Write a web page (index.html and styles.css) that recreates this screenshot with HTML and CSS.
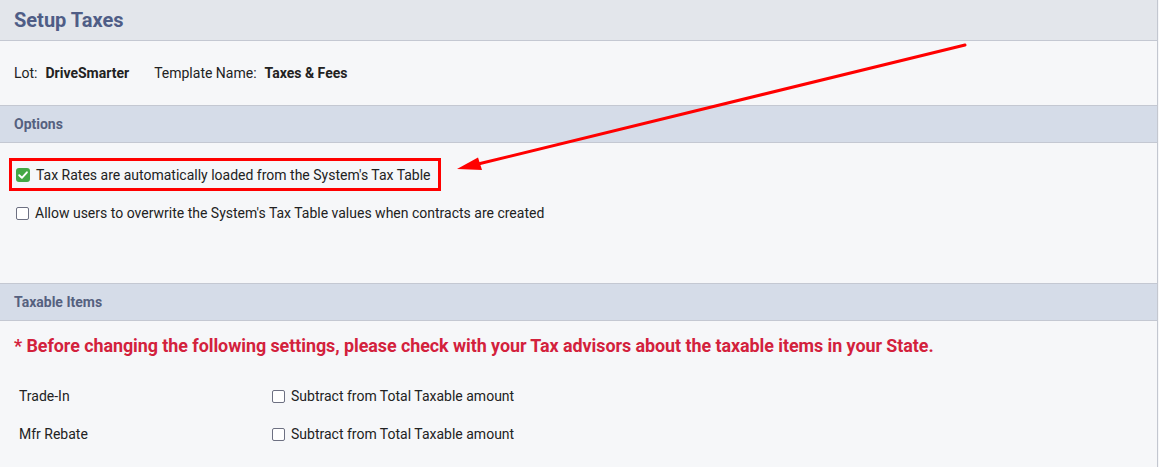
FILE: index.html
```html
<!DOCTYPE html>
<html lang="en">
    <head>
        <meta charset="UTF-8" />
        <meta name="viewport" content="width=device-width, initial-scale=1.0" />
        <title>Setup Taxes</title>
        <link rel="stylesheet" href="styles.css">
    </head>
    <body>
        <div class="page">
            <div class="title-bar">
                <h1>Setup Taxes</h1>
            </div>

            <div class="info">
                <span class="label">Lot:</span>
                <span class="value">DriveSmarter</span>
                <span class="label">Template Name:</span>
                <span class="value">Taxes &amp; Fees</span>
            </div>

            <div class="section-head">Options</div>
            <div class="options">
                <label class="option highlight">
                    <span class="check checked">
                        <svg viewBox="0 0 14 14" width="14" height="14">
                            <path d="M3.2 7.2 L5.9 9.8 L10.9 4.3" fill="none" stroke="#fff" stroke-width="1.9" stroke-linecap="round" stroke-linejoin="round" />
                        </svg>
                    </span>
                    Tax Rates are automatically loaded from the System's Tax Table
                </label>
                <label class="option">
                    <span class="check"></span>
                    Allow users to overwrite the System's Tax Table values when contracts are created
                </label>
            </div>

            <div class="section-head">Taxable Items</div>
            <div class="taxable">
                <p class="warning">* Before changing the following settings, please check with your Tax advisors about the taxable items in your State.</p>
                <div class="items">
                    <span class="item-name">Trade-In</span>
                    <label class="option"><span class="check"></span>Subtract from Total Taxable amount</label>
                    <span class="item-name">Mfr Rebate</span>
                    <label class="option"><span class="check"></span>Subtract from Total Taxable amount</label>
                </div>
            </div>
        </div>

        <!-- annotation arrow pointing at the highlighted option -->
        <svg class="arrow" width="1159" height="467" viewBox="0 0 1159 467">
            <line x1="965" y1="45" x2="476" y2="164.5" stroke="#ff0000" stroke-width="3" stroke-linecap="round" />
            <polygon points="457,169 482,170 478,157.5" fill="#ff0000" />
        </svg>
    </body>
</html>
```

FILE: styles.css
```css
body {
    margin: 0;
    font-family: Roboto, "Liberation Sans", sans-serif;
    background: #f6f7f9;
    color: #222;
}
.page {
    border-right: 1px solid #c3c7d0;
    width: 1157px;
    min-height: 467px;
}
.title-bar {
    height: 40px;
    background: #e3e6eb;
    border-bottom: 1px solid #c4c8d2;
    display: flex;
    align-items: center;
    padding-left: 14px;
}
h1 {
    margin: 0;
    font-size: 20px;
    font-weight: 700;
    color: #4f5d86;
}
.info {
    height: 64px;
    display: flex;
    align-items: center;
    padding-left: 14px;
    font-size: 14px;
    border-bottom: 1px solid #c4c8d2;
}
.info .label {
    margin-right: 8px;
}
.info .value {
    font-weight: 700;
    margin-right: 25px;
}
.section-head {
    height: 36px;
    background: #d5dce8;
    border-bottom: 1px solid #c4c8d2;
    display: flex;
    align-items: center;
    padding-left: 14px;
    font-size: 14px;
    font-weight: 700;
    color: #55617f;
}
.options {
    height: 141px;
    padding-top: 15px;
    box-sizing: border-box;
    border-bottom: 1px solid #c4c8d2;
}
.option {
    display: flex;
    align-items: center;
    gap: 6px;
    font-size: 14px;
    line-height: 20px;
}
.options .option {
    padding-left: 16px;
    margin-top: 12px;
}
.options .option.highlight {
    display: inline-flex;
    margin: 0 0 0 9px;
    padding: 4px 7px 3px 4px;
    border: 3px solid #ff0000;
}
.check {
    width: 13px;
    height: 13px;
    box-sizing: border-box;
    border: 1.5px solid #6d7082;
    border-radius: 2px;
    background: #fff;
    flex: none;
}
.check.checked {
    width: 14px;
    height: 14px;
    border: none;
    border-radius: 3px;
    background: #44a845;
    display: flex;
}
.taxable {
    padding-top: 15px;
}
.warning {
    margin: 0;
    padding-left: 14px;
    font-size: 17.9px;
    font-weight: 700;
    line-height: 20px;
    letter-spacing: -0.05px;
    color: #d3213c;
}
.items {
    display: grid;
    grid-template-columns: 253px auto;
    grid-auto-rows: 38px;
    align-items: center;
    padding: 21px 0 0 19px;
    font-size: 14px;
}
.arrow {
    position: absolute;
    left: 0;
    top: 0;
    pointer-events: none;
}
```
